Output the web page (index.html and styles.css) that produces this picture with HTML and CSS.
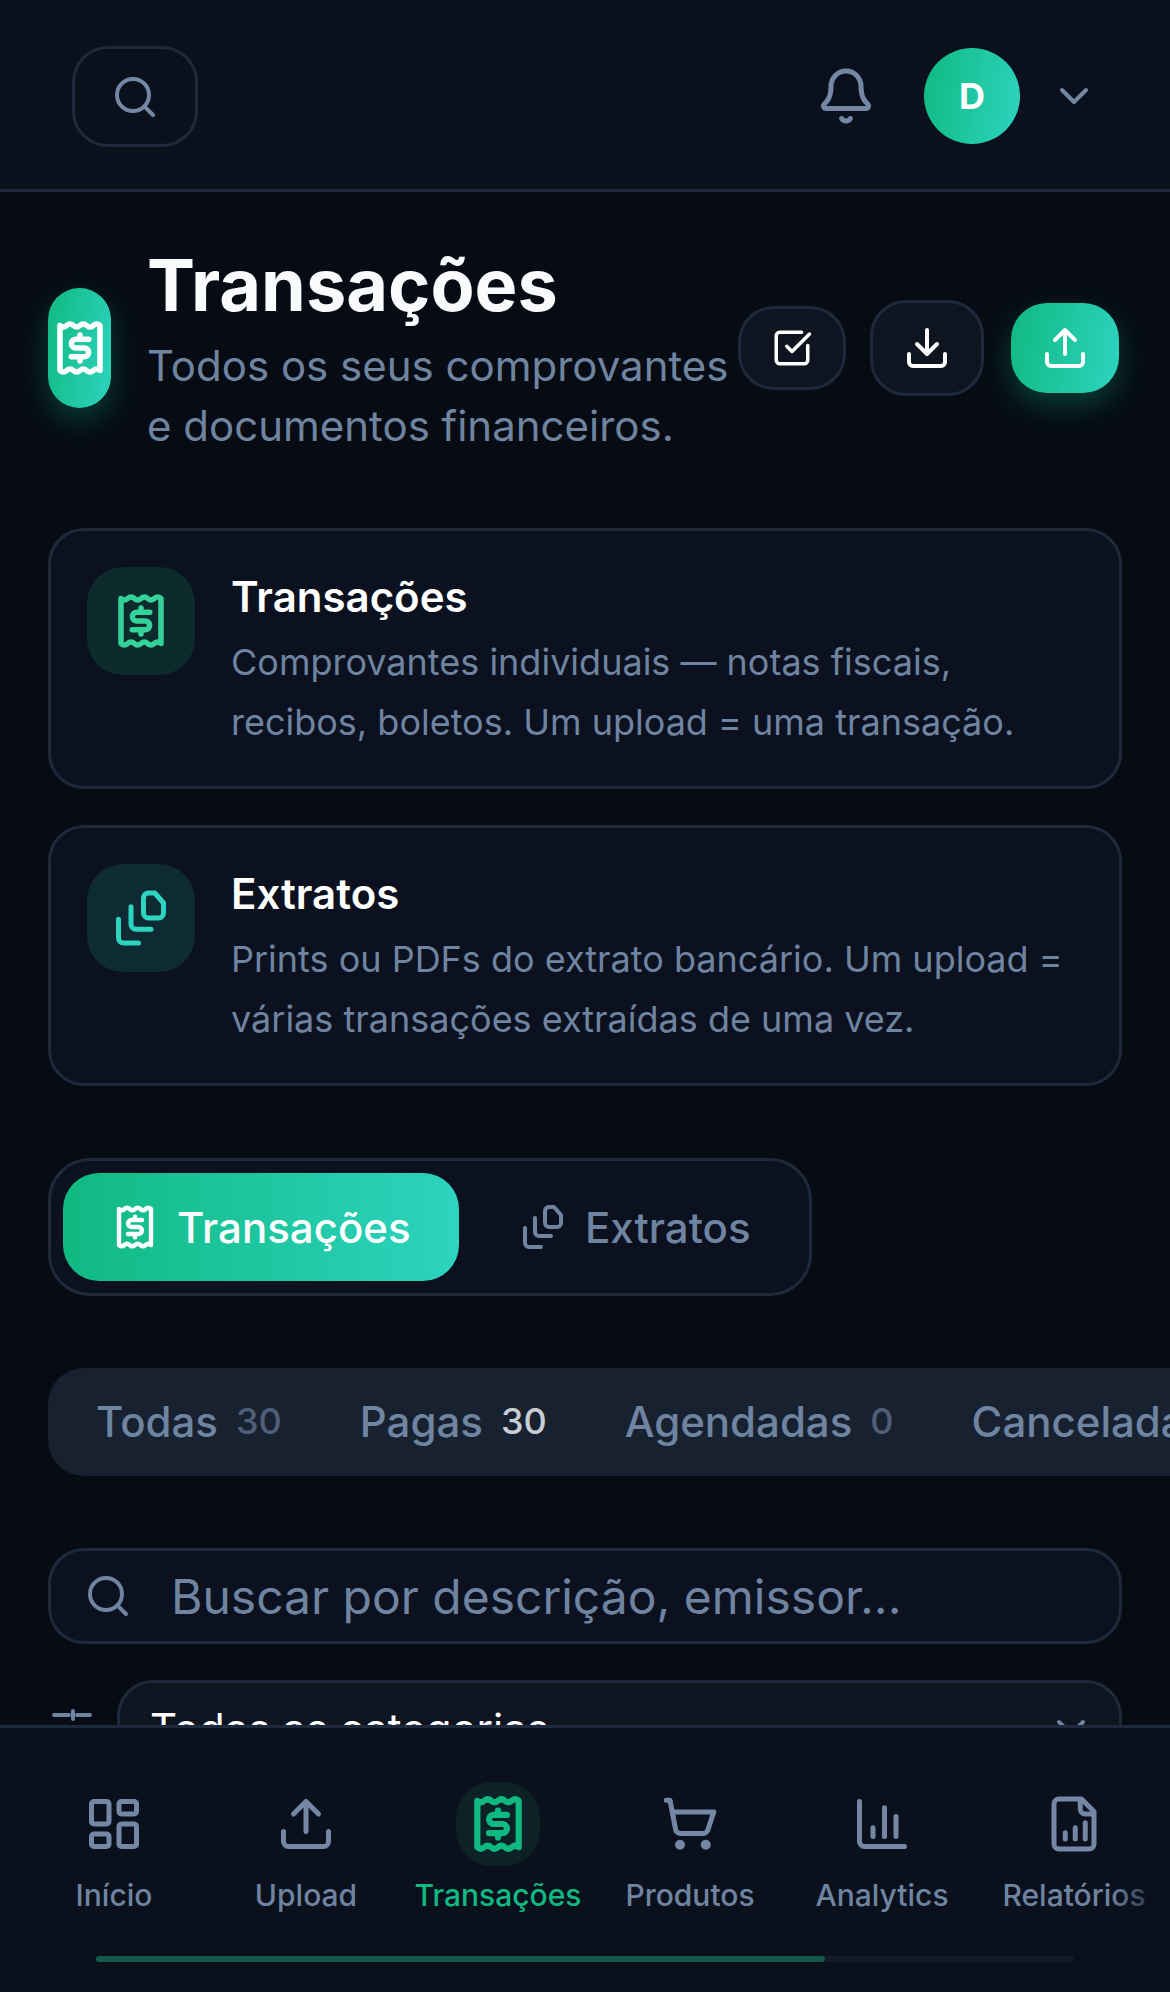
FILE: index.html
```html
<!DOCTYPE html>
<html lang="pt-BR">
<head>
<meta charset="utf-8">
<title>Transações</title>
<link rel="stylesheet" href="styles.css">
</head>
<body>
<svg class="defs" width="0" height="0">
	<symbol id="i-receipt" viewBox="0 0 24 24">
		<path d="M4 3q1.330 1.200 2.670 0t2.670 0 2.660 0 2.670 0 2.670 0 2.660 0v18q-1.330-1.200-2.670 0t-2.670 0-2.660 0-2.670 0-2.670 0-2.660 0z"/>
		<path d="M15.500 8.500h-5.200a1.750 1.750 0 0 0 0 3.500h3.400a1.750 1.750 0 0 1 0 3.500H8.500M12 6.800v1.700M12 15.500v1.700"/>
	</symbol>
	<symbol id="i-files" viewBox="0 0 24 24">
		<path d="M15 2h2.500L21 6v4a2 2 0 0 1-2 2h-4a2 2 0 0 1-2-2V4a2 2 0 0 1 2-2z"/>
		<path d="M8 7.500v7a2 2 0 0 0 2 2h6M3 12.500V20a2 2 0 0 0 2 2h6"/>
	</symbol>
	<symbol id="i-upload" viewBox="0 0 24 24">
		<path d="M21 15v4a2 2 0 0 1-2 2H5a2 2 0 0 1-2-2v-4M17 8l-5-5-5 5M12 3v12"/>
	</symbol>
	<symbol id="i-search" viewBox="0 0 24 24">
		<circle cx="11" cy="11" r="8"/>
		<path d="m21 21-4.350-4.350"/>
	</symbol>
	<symbol id="i-chevron" viewBox="0 0 24 24">
		<path d="m6 9 6 6 6-6"/>
	</symbol>
</svg>

<header class="topbar">
	<button class="search-btn"><svg class="ic ic-48"><use href="#i-search"/></svg></button>
	<div class="topbar-right">
		<svg class="ic ic-60 bell" viewBox="0 0 24 24"><path d="M10.268 21a2 2 0 0 0 3.464 0M3.262 15.326A1 1 0 0 0 4 17h16a1 1 0 0 0 .74-1.673C19.410 13.956 18 12.499 18 8A6 6 0 0 0 6 8c0 4.499-1.411 5.956-2.738 7.326"/></svg>
		<div class="avatar">D</div>
		<svg class="ic ic-48 chevron"><use href="#i-chevron"/></svg>
	</div>
</header>

<main class="content">
	<section class="page-head">
		<div class="head-icon"><svg class="ic ic-60 thick"><use href="#i-receipt"/></svg></div>
		<div class="head-text">
			<h1>Transações</h1>
			<p>Todos os seus comprovantes e documentos financeiros.</p>
		</div>
		<div class="head-actions">
			<button class="act act-select"><svg class="ic ic-42" viewBox="0 0 24 24"><path d="M21 10.500V19a2 2 0 0 1-2 2H5a2 2 0 0 1-2-2V5a2 2 0 0 1 2-2h12.500M9 11l3 3L22 4"/></svg></button>
			<button class="act act-down"><svg class="ic ic-48" viewBox="0 0 24 24"><path d="M21 15v4a2 2 0 0 1-2 2H5a2 2 0 0 1-2-2v-4M7 10l5 5 5-5M12 15V3"/></svg></button>
			<button class="act act-up"><svg class="ic ic-48"><use href="#i-upload"/></svg></button>
		</div>
	</section>

	<section class="info-card">
		<div class="info-icon green"><svg class="ic ic-60 thick"><use href="#i-receipt"/></svg></div>
		<div>
			<h2>Transações</h2>
			<p>Comprovantes individuais — notas fiscais, recibos, boletos. Um upload = uma transação.</p>
		</div>
	</section>
	<section class="info-card">
		<div class="info-icon teal"><svg class="ic ic-60"><use href="#i-files"/></svg></div>
		<div>
			<h2>Extratos</h2>
			<p>Prints ou PDFs do extrato bancário. Um upload = várias transações extraídas de uma vez.</p>
		</div>
	</section>

	<div class="seg">
		<div class="seg-tab on"><svg class="ic ic-48 thick"><use href="#i-receipt"/></svg>Transações</div>
		<div class="seg-tab"><svg class="ic ic-48"><use href="#i-files"/></svg>Extratos</div>
	</div>

	<div class="status-bar">
		<div class="status">Todas <span class="count">30</span></div>
		<div class="status">Pagas <span class="count hot">30</span></div>
		<div class="status">Agendadas <span class="count">0</span></div>
		<div class="status">Canceladas <span class="count">0</span></div>
	</div>

	<div class="search-box">
		<svg class="ic ic-48"><use href="#i-search"/></svg>
		<span>Buscar por descrição, emissor...</span>
	</div>

	<div class="filter-row">
		<svg class="ic ic-48 sliders" viewBox="0 0 24 24"><path d="M21 4h-6.500M10.500 4H3M21 12h-9M8 12H3M21 20h-5M12 20H3M12.500 2v4M8 10v4M16 18v4"/></svg>
		<div class="select">Todas as categorias<svg class="ic ic-48"><use href="#i-chevron"/></svg></div>
	</div>
</main>

<nav class="bottom-nav">
	<div class="nav-items">
		<div class="nav-item">
			<div class="nav-ic"><svg class="ic ic-60" viewBox="0 0 24 24"><rect x="3" y="3" width="7" height="9" rx="1"/><rect x="14" y="3" width="7" height="5" rx="1"/><rect x="14" y="12" width="7" height="9" rx="1"/><rect x="3" y="16" width="7" height="5" rx="1"/></svg></div>
			<span>Início</span>
		</div>
		<div class="nav-item">
			<div class="nav-ic"><svg class="ic ic-60"><use href="#i-upload"/></svg></div>
			<span>Upload</span>
		</div>
		<div class="nav-item active">
			<div class="nav-ic"><svg class="ic ic-62"><use href="#i-receipt"/></svg></div>
			<span>Transações</span>
		</div>
		<div class="nav-item">
			<div class="nav-ic"><svg class="ic ic-60" viewBox="0 0 24 24"><path d="M2.500 2.500H4l2.200 11.500a2 2 0 0 0 2 1.800h9a2 2 0 0 0 2-1.600l2.300-7H5"/><circle class="dot" cx="8" cy="20.300" r="1"/><circle class="dot" cx="18.300" cy="20.300" r="1"/></svg></div>
			<span>Produtos</span>
		</div>
		<div class="nav-item">
			<div class="nav-ic"><svg class="ic ic-60" viewBox="0 0 24 24"><path d="M3 3v16a2 2 0 0 0 2 2h16M8.400 13.500V17M13 5.500V17M17.600 9v8"/></svg></div>
			<span>Analytics</span>
		</div>
		<div class="nav-item">
			<div class="nav-ic"><svg class="ic ic-60" viewBox="0 0 24 24"><path d="M15 2H6a2 2 0 0 0-2 2v16a2 2 0 0 0 2 2h12a2 2 0 0 0 2-2V7ZM14.500 2v4a2 2 0 0 0 2 2H20M8.500 15.500V18M12.500 13.500V18M16.500 11.500V18"/></svg></div>
			<span>Relatórios</span>
		</div>
	</div>
	<div class="nav-fade"></div>
	<div class="scroll-track"><div class="scroll-thumb"></div></div>
</nav>
</body>
</html>
```

FILE: styles.css
```css
* {
	box-sizing: border-box;
}

html, body {
	margin: 0;
	padding: 0;
}

body {
	width: 1170px;
	height: 1992px;
	overflow: hidden;
	position: relative;
	background: #060b14;
	font-family: Inter, "Liberation Sans", sans-serif;
	color: #fff;
}

h1, h2, p {
	margin: 0;
}

button {
	padding: 0;
	font: inherit;
	color: inherit;
}

.defs {
	position: absolute;
}

.ic {
	fill: none;
	stroke: currentColor;
	stroke-width: 2;
	stroke-linecap: round;
	stroke-linejoin: round;
	flex: none;
	display: block;
}

.ic-42 { width: 42px; height: 42px; }
.ic-48 { width: 48px; height: 48px; }
.ic-60 { width: 60px; height: 60px; }
.ic-62 { width: 62px; height: 62px; }

.thick {
	stroke-width: 2.2;
}

/* top bar */
.topbar {
	height: 192px;
	padding: 46px 72px 0 72px;
	display: flex;
	justify-content: space-between;
	align-items: flex-start;
	background: #0a111c;
	border-bottom: 3px solid #1e293b;
}

.search-btn {
	width: 126px;
	height: 101px;
	display: flex;
	align-items: center;
	justify-content: center;
	background: transparent;
	border: 3px solid #1e293b;
	border-radius: 36px;
	color: #7488a6;
}

.topbar-right {
	display: flex;
	align-items: center;
	height: 100px;
}

.bell {
	color: #7488a6;
	margin-right: 48px;
}

.avatar {
	width: 96px;
	height: 96px;
	border-radius: 50%;
	display: flex;
	align-items: center;
	justify-content: center;
	background: linear-gradient(100deg, #10b981, #2dd4bf);
	font-size: 36px;
	font-weight: 700;
}

.chevron {
	color: #7488a6;
	margin-left: 30px;
}

/* content */
.content {
	padding: 48px 48px 0;
}

.page-head {
	display: flex;
	align-items: center;
	height: 216px;
}

.head-icon {
	width: 63px;
	height: 120px;
	flex: none;
	margin-right: 36px;
	border-radius: 32px;
	display: flex;
	align-items: center;
	justify-content: center;
	background: linear-gradient(100deg, #10b981, #2dd4bf);
	box-shadow: 0 12px 30px rgba(16, 185, 129, .3);
}

.head-text {
	width: 591px;
	flex: none;
}

.head-text h1 {
	font-size: 72px;
	line-height: 90px;
	font-weight: 700;
	color: #f8fafc;
}

.head-text p {
	margin-top: 6px;
	font-size: 42px;
	line-height: 60px;
	color: #6f84a0;
}

.head-actions {
	display: flex;
	align-items: center;
}

.act {
	display: flex;
	align-items: center;
	justify-content: center;
	background: #0f1520;
	border: 3px solid #1e293b;
	color: #fff;
}

.act-select {
	width: 108px;
	height: 84px;
	border-radius: 36px;
}

.act-down {
	width: 114px;
	height: 96px;
	margin-left: 24px;
	border-radius: 36px;
}

.act-up {
	width: 108px;
	height: 90px;
	margin-left: 27px;
	border: 0;
	border-radius: 36px;
	background: linear-gradient(100deg, #10b981, #2dd4bf);
	box-shadow: 0 12px 30px rgba(16, 185, 129, .3);
}

.info-card {
	display: flex;
	gap: 36px;
	height: 261px;
	padding: 36px;
	background: #0b111e;
	border: 3px solid #1e293b;
	border-radius: 36px;
}

.page-head + .info-card {
	margin-top: 72px;
}

.info-card + .info-card {
	margin-top: 36px;
}

.info-icon {
	width: 108px;
	height: 108px;
	flex: none;
	border-radius: 36px;
	display: flex;
	align-items: center;
	justify-content: center;
}

.info-icon.green {
	background: #0d2a2c;
	color: #34d399;
}

.info-icon.teal {
	background: #0e2a32;
	color: #2dd4bf;
}

.info-card h2 {
	font-size: 42px;
	line-height: 60px;
	font-weight: 600;
	color: #fff;
}

.info-card p {
	margin-top: 5px;
	font-size: 36px;
	line-height: 60px;
	color: #6f84a0;
}

/* tabs */
.seg {
	display: flex;
	gap: 12px;
	width: 764px;
	height: 138px;
	margin-top: 72px;
	padding: 12px;
	background: #0b111e;
	border: 3px solid #1e293b;
	border-radius: 42px;
}

.seg-tab {
	display: flex;
	align-items: center;
	gap: 18px;
	height: 108px;
	padding: 0 48px;
	font-size: 42px;
	font-weight: 500;
	color: #6f84a0;
	border-radius: 36px;
}

.seg-tab.on {
	width: 396px;
	flex: none;
	color: #fff;
	background: linear-gradient(90deg, #10b981, #2dd4bf);
}

.status-bar {
	display: flex;
	gap: 6px;
	width: 1200px;
	height: 108px;
	margin-top: 72px;
	padding: 0 12px 2px;
	align-items: center;
	background: #182130;
	border-radius: 36px;
}

.status {
	padding: 0 36px;
	flex: none;
	display: flex;
	align-items: center;
	gap: 18px;
	font-size: 42px;
	font-weight: 500;
	color: #6f84a0;
}

.count {
	font-size: 36px;
	color: #4f5f77;
}

.count.hot {
	color: #c9ced4;
}

.search-box {
	display: flex;
	align-items: center;
	gap: 39px;
	height: 96px;
	margin-top: 72px;
	padding: 0 33px;
	background: #0b111e;
	border: 3px solid #1e293b;
	border-radius: 36px;
	color: #6f84a0;
	font-size: 48px;
}

.filter-row {
	display: flex;
	margin-top: 36px;
}

.sliders {
	color: #6f84a0;
	margin: 27px 21px 0 0;
}

.select {
	flex: 1;
	height: 96px;
	padding: 0 24px 0 30px;
	display: flex;
	align-items: center;
	justify-content: space-between;
	font-size: 42px;
	background: #0f1520;
	border: 3px solid #1e293b;
	border-radius: 36px;
}

.select .ic {
	color: #6f84a0;
}

/* bottom nav sits over the page */
.bottom-nav {
	position: fixed;
	left: 0;
	right: 0;
	bottom: 0;
	height: 267px;
	padding-top: 54px;
	background: #0a111c;
	border-top: 3px solid #1e293b;
}

.nav-items {
	display: flex;
	padding-left: 18px;
}

.nav-item {
	width: 192px;
	flex: none;
	display: flex;
	flex-direction: column;
	align-items: center;
	gap: 8px;
	font-size: 30px;
	line-height: 42px;
	font-weight: 500;
	color: #6f84a0;
}

.nav-ic {
	width: 84px;
	height: 84px;
	display: flex;
	align-items: center;
	justify-content: center;
	border-radius: 36px;
	color: #7488a6;
}

.nav-ic .dot {
	fill: currentColor;
}

.nav-item.active {
	color: #10b981;
}

.nav-item.active .nav-ic {
	background: #0d2226;
	color: #10b981;
}

.nav-item.active .ic {
	stroke-width: 2.4;
}

.nav-fade {
	position: absolute;
	top: 0;
	right: 0;
	bottom: 0;
	width: 60px;
	background: linear-gradient(90deg, rgba(10, 17, 28, 0), #0a111c);
}

.scroll-track {
	height: 6px;
	margin: 40px 96px 0;
	border-radius: 3px;
	background: #111a27;
}

.scroll-thumb {
	width: 729px;
	height: 6px;
	border-radius: 3px;
	background: #115a4a;
}
```
